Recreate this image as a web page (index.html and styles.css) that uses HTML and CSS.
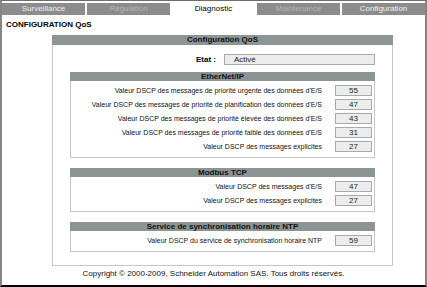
FILE: index.html
```html
<!DOCTYPE html>
<html lang="fr">
<head>
<meta charset="utf-8">
<title>Configuration QoS</title>
<link rel="stylesheet" href="styles.css">
</head>
<body>
<div class="frame">
  <nav class="tabs">
    <div class="tab">Surveillance</div>
    <div class="tab tab-disabled">Régulation</div>
    <div class="tab tab-active">Diagnostic</div>
    <div class="tab tab-disabled">Maintenance</div>
    <div class="tab">Configuration</div>
  </nav>
  <h1 class="title">CONFIGURATION QoS</h1>
  <div class="panel">
    <div class="panel-head">Configuration QoS</div>
    <div class="panel-body">
      <div class="etat">
        <span class="etat-label">Etat :</span>
        <span class="etat-box">Activé</span>
      </div>
      <div class="section">
        <div class="section-head">EtherNet/IP</div>
        <div class="section-body">
          <div class="row"><span class="label">Valeur DSCP des messages de priorité urgente des données d'E/S</span><span class="val">55</span></div>
          <div class="row"><span class="label">Valeur DSCP des messages de priorité de planification des données d'E/S</span><span class="val">47</span></div>
          <div class="row"><span class="label">Valeur DSCP des messages de priorité élevée des données d'E/S</span><span class="val">43</span></div>
          <div class="row"><span class="label">Valeur DSCP des messages de priorité faible des données d'E/S</span><span class="val">31</span></div>
          <div class="row"><span class="label">Valeur DSCP des messages explicites</span><span class="val">27</span></div>
        </div>
      </div>
      <div class="section">
        <div class="section-head">Modbus TCP</div>
        <div class="section-body">
          <div class="row"><span class="label">Valeur DSCP des messages d'E/S</span><span class="val">47</span></div>
          <div class="row"><span class="label">Valeur DSCP des messages explicites</span><span class="val">27</span></div>
        </div>
      </div>
      <div class="section">
        <div class="section-head">Service de synchronisation horaire NTP</div>
        <div class="section-body">
          <div class="row"><span class="label">Valeur DSCP du service de synchronisation horaire NTP</span><span class="val">59</span></div>
        </div>
      </div>
    </div>
  </div>
  <footer class="copyright">Copyright © 2000-2009, Schneider Automation SAS. Tous droits réservés.</footer>
</div>
</body>
</html>
```

FILE: styles.css
```css
* { box-sizing: border-box; }
html, body { margin: 0; padding: 0; background: #fff; }
body { font-family: "Liberation Sans", Arial, sans-serif; color: #000; }

.frame {
  width: 427px;
  height: 287px;
  border-top: 1px solid #6e6e6e;
  border-left: 2px solid #858585;
  border-right: 2px solid #858585;
  border-bottom: 2px solid #000;
  display: flex;
  flex-direction: column;
}

.tabs {
  display: flex;
  gap: 2px;
  margin-top: 2px;
  height: 12px;
}
.tab {
  flex: 1;
  background: #8c8c8c;
  color: #f2f2f2;
  font-size: 8px;
  line-height: 12px;
  text-align: center;
}
.tab-disabled { color: #b6b6b6; }
.tab-active { background: #fff; color: #000; }

.title {
  margin: 5px 0 0 4px;
  font-size: 8px;
  line-height: 10px;
  font-weight: bold;
}

.panel {
  margin: 5px 0 0 50px;
  width: 341px;
}
.panel-head {
  height: 10px;
  background: #8d9494;
  font-size: 8px;
  line-height: 10px;
  font-weight: bold;
  text-align: center;
  color: #111;
}
.panel-body {
  border: 1px solid #c6c6c6;
  border-top: none;
  height: 221px;
  padding: 9px 17px 0 17px;
}

.etat {
  display: flex;
  align-items: center;
  height: 11px;
}
.etat-label {
  width: 154px;
  text-align: right;
  padding-right: 8px;
  font-size: 8px;
  font-weight: bold;
}
.etat-box {
  flex: 1;
  height: 11px;
  background: #ececec;
  border: 1px solid #a9a9a9;
  font-size: 8px;
  line-height: 9px;
  padding-left: 9px;
  color: #222;
}

.section {
  margin-top: 7px;
  border: 1px solid #c6c6c6;
  border-top: none;
}
.section + .section { margin-top: 10px; }
.section-head {
  height: 9px;
  margin: 0 -1px;
  background: #8d9494;
  font-size: 8px;
  line-height: 9px;
  font-weight: bold;
  text-align: center;
  color: #111;
}
.section-body {
  padding: 3px 2px 3px 0;
}
.row {
  display: flex;
  justify-content: flex-end;
  align-items: flex-start;
  height: 14px;
  padding-top: 1px;
}
.label {
  font-size: 7px;
  line-height: 11px;
  color: #111;
  padding-right: 13px;
}
.val {
  width: 37px;
  height: 11px;
  background: #ececec;
  border: 1px solid #a9a9a9;
  font-size: 8px;
  line-height: 9px;
  text-align: center;
  color: #222;
}

.copyright {
  text-align: center;
  font-size: 8px;
  line-height: 14px;
  margin-top: 1px;
  color: #111;
}
```
